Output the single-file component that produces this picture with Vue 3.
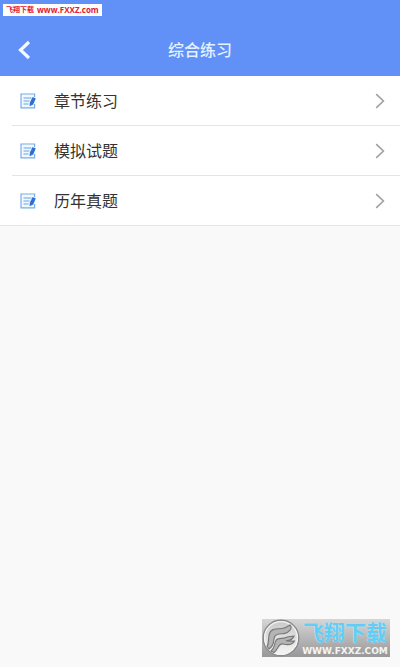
<script setup>
const items = ['章节练习', '模拟试题', '历年真题']
</script>

<template>
  <div class="page">
    <header class="header">
      <a class="tag" href="#"><span class="tag-name">飞翔下载</span><span class="tag-url">www.FXXZ.com</span></a>
      <button class="back" type="button" aria-label="返回">
        <svg width="14" height="20" viewBox="0 0 14 20">
          <path d="M12 2 L3.5 10 L12 18" fill="none" stroke="#f4faff" stroke-width="3.2" />
        </svg>
      </button>
      <h1 class="title">综合练习</h1>
    </header>

    <main>
      <ul class="list">
        <li v-for="item in items" :key="item">
          <a class="row" href="#">
            <svg class="edit" width="16" height="16" viewBox="0 0 16 16">
              <path d="M14.6 11 V14.9 H1 V1 H14.6 V4" fill="#f1f8ff" stroke="#79ade4" stroke-width="1.2" />
              <path d="M3.5 5 H11.5 M3.5 8 H9.5 M3.5 11 H8.5" fill="none" stroke="#6ba3e8" stroke-width="1.2" />
              <path d="M12.6 4 L15.8 5.6 L13.2 11.4 L9.6 13.2 L9.8 9.8 Z" fill="#2e6fd0" />
            </svg>
            <span class="label">{{ item }}</span>
            <svg class="chevron" width="10" height="16" viewBox="0 0 10 16">
              <path d="M1.2 1.2 L8.4 8 L1.2 14.8" fill="none" stroke="#a0a0a0" stroke-width="1.6" />
            </svg>
          </a>
        </li>
      </ul>
    </main>

    <a class="mark" href="#">
      <svg class="logo" width="38" height="38" viewBox="0 0 38 38">
        <defs>
          <linearGradient id="disc" x1="0" y1="0" x2="0" y2="1">
            <stop offset="0" stop-color="#c8c8c8" />
            <stop offset="1" stop-color="#f6f6f6" />
          </linearGradient>
        </defs>
        <circle cx="19" cy="19" r="17.8" fill="url(#disc)" stroke="#8a8a8a" stroke-width="1.4" />
        <circle cx="19" cy="19" r="16.4" fill="none" stroke="#f4f4f4" stroke-width="1.2" />
        <path d="M5 27 C8 23 5 16 9 12 C13 8 18 11 22 9 C25 8 26 7 28 6 C31 9 27 14 22 14.6 C18 15 14 14 12.5 18 C11 22 13 26 7 30 Z" fill="#b4b4b4" stroke="#777" stroke-width="1.1" />
        <path d="M9 32 C13 29 12 25 14 21.500 C16 18 20 20.5 24 18.5 C27 17 29 18 32 17 C31 20.5 28 21.500 24 21.8 C27 22.8 30 22 32.5 22 C30 26.5 25 26 21 25 C16 24 17 30 12 33.5 Z" fill="#b4b4b4" stroke="#777" stroke-width="1.1" />
      </svg>
      <span class="mark-text">
        <span class="mark-name">飞翔下载</span>
        <span class="mark-url">WWW.FXXZ.COM</span>
      </span>
    </a>
  </div>
</template>

<style>
body {
  margin: 0;
  background: #f9f9f9;
}
</style>

<style scoped>
.page {
  position: relative;
  min-height: 100vh;
  font-family: "Liberation Sans", "Noto Sans CJK SC", sans-serif;
  background: #f9f9f9;
}
a {
  color: inherit;
  text-decoration: none;
}
.header {
  position: relative;
  display: grid;
  grid-template-columns: 48px 1fr 48px;
  align-items: center;
  box-sizing: border-box;
  height: 76px;
  padding-top: 24px;
  background: #6190f7;
}
.tag {
  position: absolute;
  top: 4px;
  left: 3px;
  display: flex;
  align-items: center;
  gap: 3px;
  height: 12px;
  padding: 0 3px;
  background: #fff;
  color: #e3202c;
  font-weight: 700;
  white-space: nowrap;
}
.tag-name {
  font-size: 7px;
  line-height: 12px;
}
.tag-url {
  font-family: "Open Sans", sans-serif;
  font-size: 8px;
  line-height: 12px;
}
.back {
  display: flex;
  align-items: center;
  height: 48px;
  padding: 0 0 0 17px;
  border: 0;
  background: none;
}
.title {
  margin: 0;
  padding-top: 2px;
  color: #e4f1ff;
  font-size: 16px;
  font-weight: 500;
  line-height: 24px;
  text-align: center;
}
.list {
  margin: 0;
  padding: 0;
  list-style: none;
  background: #fff;
  border-bottom: 1px solid #e6e6e6;
}
li + li {
  margin-left: 12px;
  border-top: 1px solid #e4e4e4;
}
.row {
  display: flex;
  align-items: center;
  height: 49px;
  padding: 0 15px 0 20px;
}
li + li .row {
  padding-left: 8px;
}
.label {
  flex: 1;
  margin-left: 18px;
  padding-top: 2px;
  color: #333;
  font-size: 16px;
  line-height: 24px;
}
.mark {
  position: absolute;
  right: 10px;
  bottom: 10px;
  display: flex;
  align-items: center;
  width: 128px;
  height: 38px;
  background: linear-gradient(#d6d6d6, #989898);
}
.mark-text {
  display: flex;
  flex-direction: column;
  align-items: center;
  flex: 1;
  padding-top: 2px;
  white-space: nowrap;
}
.mark-name {
  color: #62cdf4;
  font-size: 21px;
  font-weight: 700;
  line-height: 24px;
  text-shadow: 0 0 1px #d8f4ff;
}
.mark-url {
  color: #f4f4f4;
  font-family: "DejaVu Sans", sans-serif;
  font-size: 9px;
  font-weight: 700;
  line-height: 12px;
}
</style>
